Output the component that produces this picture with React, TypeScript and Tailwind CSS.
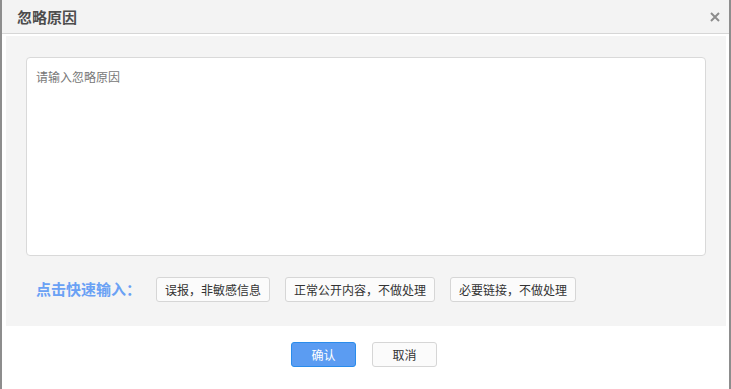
import { useState } from 'react';

const quickReasons = ['误报，非敏感信息', '正常公开内容，不做处理', '必要链接，不做处理'];

const IgnoreReasonDialog = () => {
  const [reason, setReason] = useState('');

  return (
    <div
      className="w-[731px] h-[389px] bg-white border-l-2 border-r-2 border-[#8d8d8d] flex flex-col"
      style={{ fontFamily: '"Microsoft YaHei", "Noto Sans CJK SC", "Liberation Sans", sans-serif' }}
    >
      <div className="h-[34px] shrink-0 bg-[#f3f3f3] border-b border-[#d6d6d6] flex items-center justify-between pl-[15px] pr-[9px]">
        <h1 className="text-[15px] font-bold text-[#4d4d4d] leading-none">忽略原因</h1>
        <button className="w-[10px] h-[10px] flex items-center justify-center">
          <svg width="10" height="10" viewBox="0 0 10 10">
            <path d="M1 1 L9 9 M9 1 L1 9" stroke="#8c8c8c" strokeWidth="2" fill="none" />
          </svg>
        </button>
      </div>

      <div className="mt-[2px] ml-[4px] mr-[3px] bg-[#f4f4f4] px-[20px] pt-[21px] pb-[24px]">
        <textarea
          value={reason}
          onChange={(e) => setReason(e.target.value)}
          placeholder="请输入忽略原因"
          className="block w-full h-[199px] resize-none bg-white border border-[#d9d9d9] rounded-[4px] px-[9px] pt-[11px] pb-[9px] text-[12px] leading-[16px] text-[#333] placeholder:text-[#777] outline-none"
        />

        <div className="mt-[21px] flex items-center">
          <span className="w-[130px] pl-[10px] text-[15px] font-bold text-[#6aa1f4]">点击快速输入：</span>
          <div className="flex gap-[15px]">
            {quickReasons.map((text) => (
              <button
                key={text}
                onClick={() => setReason(text)}
                className="h-[25px] px-[8px] bg-[#fbfbfb] border border-[#d6d6d6] rounded-[3px] text-[12px] text-[#333] leading-none"
              >
                {text}
              </button>
            ))}
          </div>
        </div>
      </div>

      <div className="mt-[16px] pr-[3px] flex justify-center gap-[16px]">
        <button className="w-[65px] h-[25px] bg-[#5b9cf2] border border-[#2a8ceb] rounded-[3px] text-[12px] text-white leading-none">
          确认
        </button>
        <button className="w-[65px] h-[25px] bg-[#fbfbfb] border border-[#d6d6d6] rounded-[3px] text-[12px] text-[#333] leading-none">
          取消
        </button>
      </div>
    </div>
  );
};

export default IgnoreReasonDialog;
